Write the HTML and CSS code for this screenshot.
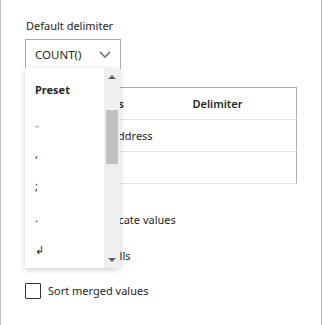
FILE: index.html
```html
<!DOCTYPE html>
<html lang="en">
<head>
    <meta charset="UTF-8">
    <meta name="viewport" content="width=device-width, initial-scale=1.0">
    <title>Merge settings</title>
    <link rel="stylesheet" href="styles.css">
</head>
<body>
    <div class="panel">
        <div class="field">
            <label class="field-label">Default delimiter</label>
            <div class="select">
                <span class="select-value">COUNT()</span>
                <svg class="chevron" width="12" height="7" viewBox="0 0 12 7">
                    <path d="M1 1 L6 6 L11 1" fill="none" stroke="#6b6b6b" stroke-width="1.6"/>
                </svg>
            </div>

            <!-- open dropdown list -->
            <div class="dropdown">
                <ul class="options">
                    <li class="group">Preset</li>
                    <li><span class="space-sym">␣</span></li>
                    <li>,</li>
                    <li>;</li>
                    <li>.</li>
                    <li>↲</li>
                </ul>
                <div class="scrollbar">
                    <span class="arrow up"></span>
                    <span class="thumb"></span>
                    <span class="arrow down"></span>
                </div>
            </div>
        </div>

        <table class="columns-table">
            <thead>
                <tr>
                    <th class="col-name">Columns</th>
                    <th class="col-delim">Delimiter</th>
                </tr>
            </thead>
            <tbody>
                <tr>
                    <td class="col-name">Address</td>
                    <td></td>
                </tr>
                <tr>
                    <td class="col-name">&nbsp;</td>
                    <td></td>
                </tr>
            </tbody>
        </table>

        <div class="options-list">
            <label class="check"><span class="box"></span>Remove duplicate values</label>
            <label class="check"><span class="box"></span>Skip empty cells</label>
            <label class="check"><span class="box"></span>Sort merged values</label>
        </div>
    </div>
</body>
</html>
```

FILE: styles.css
```css
/* Base */
body {
    margin: 0;
    padding: 0;
    font-family: "Noto Sans", sans-serif;
    font-size: 11px;
    color: #262626;
    background-color: #fff;
}

.panel {
    box-sizing: border-box;
    width: 322px;
    height: 325px;
    border-left: 1px solid #c0c0c0;
    border-right: 1px solid #b9b9b9;
    padding: 18px 0 0 24px;
}

/* Delimiter select */
.field {
    position: relative;
}

.field-label {
    display: block;
    line-height: 16px;
    margin-left: 1px;
    margin-bottom: 5px;
}

.select {
    box-sizing: border-box;
    width: 96px;
    height: 30px;
    border: 1px solid #ababab;
    display: flex;
    align-items: center;
    justify-content: space-between;
    padding: 0 9px 0 9px;
}

.select-value {
    color: #262626;
    font-size: 11.5px;
}

/* Dropdown list */
.dropdown {
    position: absolute;
    top: 50px;
    left: 0;
    width: 95px;
    height: 200px;
    background-color: #fff;
    box-shadow: 0 2px 6px rgba(0, 0, 0, 0.18);
    display: flex;
    z-index: 10;
}

.options {
    list-style: none;
    margin: 0;
    padding: 6px 0 0 10px;
    flex: 1;
}

.options li {
    height: 32px;
    line-height: 32px;
}

.options .group {
    font-weight: bold;
}

.space-sym {
    font-family: "DejaVu Sans", sans-serif;
    font-size: 6px;
}

.scrollbar {
    width: 16px;
    background-color: #f0f0f0;
    position: relative;
}

.thumb {
    position: absolute;
    left: 2px;
    top: 42px;
    width: 12px;
    height: 54px;
    background-color: #c1c1c1;
}

.arrow {
    position: absolute;
    left: 4px;
    width: 0;
    height: 0;
    border-left: 4px solid transparent;
    border-right: 4px solid transparent;
}

.arrow.up {
    top: 7px;
    border-bottom: 4px solid #606060;
}

.arrow.down {
    bottom: 6px;
    border-top: 4px solid #606060;
}

/* Columns table */
.columns-table {
    width: 272px;
    margin-top: 18px;
    table-layout: fixed;
    border-collapse: collapse;
    border: 1px solid #adadad;
}

.columns-table th,
.columns-table td {
    height: 31px;
    padding: 0;
    border-bottom: 1px solid #e3e3e3;
}

.columns-table th {
    font-weight: 600;
}

.columns-table th.col-name {
    width: 98px;
    text-align: right;
    padding-right: 15px;
}

.columns-table td.col-name {
    text-align: left;
    padding-left: 85px;
    white-space: nowrap;
}

/* Checkboxes */
.options-list {
    display: flex;
    flex-direction: column;
    gap: 19.5px;
    margin-top: 28px;
}

.check {
    display: flex;
    align-items: center;
    gap: 7px;
    line-height: 16px;
}

.box {
    box-sizing: border-box;
    width: 16px;
    height: 16px;
    border: 1px solid #333;
    border-radius: 1px;
}
```
